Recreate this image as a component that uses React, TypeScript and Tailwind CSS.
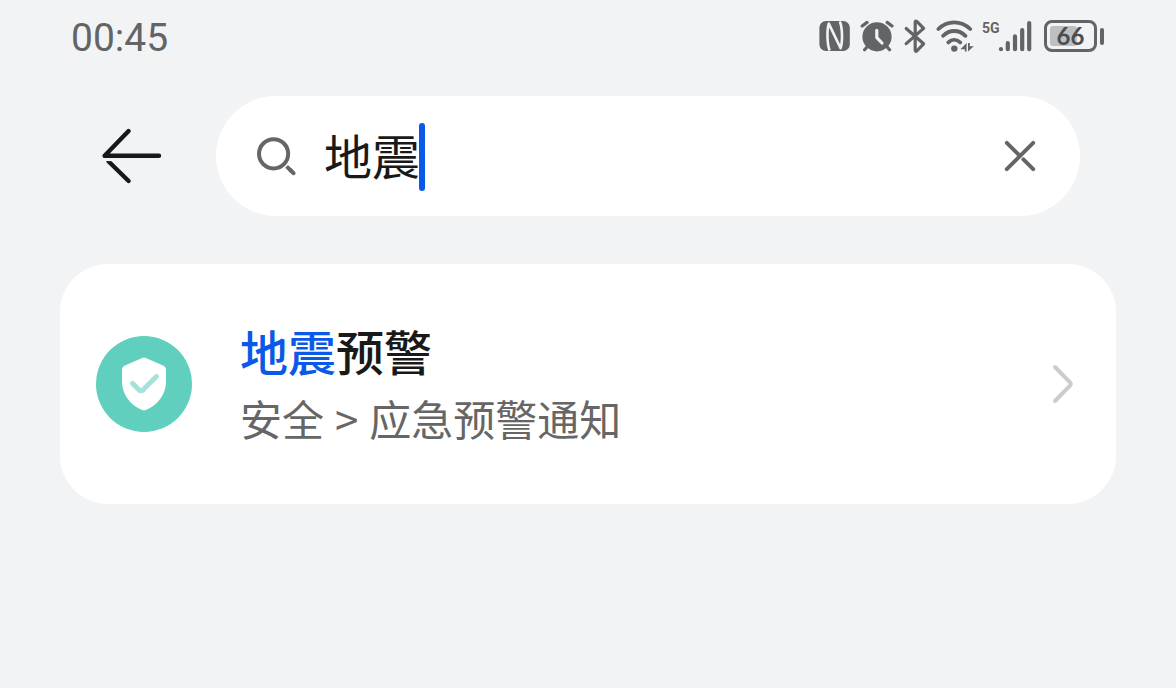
import React, { useState } from "react";

function NfcIcon() {
  return (
    <svg width="34" height="36" viewBox="0 0 34 36" fill="none" aria-label="NFC">
      <rect x="1.4" y="3" width="30.4" height="30" rx="6.5" fill="#626466" />
      <path d="M11.6 32.4C9 26 8.8 12 10.8 5.6L22.6 30.2C24.6 24 24.6 10 21.8 3.6" stroke="#f1f3f5" strokeWidth="2.6" strokeLinejoin="round" />
    </svg>
  );
}

function AlarmIcon() {
  return (
    <svg width="34" height="36" viewBox="0 0 34 36" fill="none" aria-label="闹钟">
      <circle cx="17" cy="18.8" r="14.6" fill="#626466" />
      <path d="M2.2 8L7 4.4M32 8L27.2 4.4M7 29L4.6 31.8M27.2 29L29.6 31.8" stroke="#626466" strokeWidth="3.2" strokeLinecap="round" />
      <path d="M16.8 12.4V19.6L22 25" stroke="#f1f3f5" strokeWidth="3.2" strokeLinecap="round" strokeLinejoin="round" />
    </svg>
  );
}

function BluetoothIcon() {
  return (
    <svg width="26" height="36" viewBox="0 0 26 36" fill="none" aria-label="蓝牙">
      <path d="M4.2 10.5L21.6 25.8L14.8 33Q13.2 34 13.2 32V4.4Q13.2 2.4 14.8 3.4L21.6 10.4L4.2 25.6" stroke="#626466" strokeWidth="3.2" strokeLinecap="round" strokeLinejoin="round" />
    </svg>
  );
}

function WifiIcon() {
  return (
    <svg width="38" height="36" viewBox="0 0 38 36" fill="none" aria-label="无线网络">
      <path d="M2.4 11C11.4 2.2 25 2.2 34.2 11M7.2 17.8C13.4 11.4 23 11.4 29.4 17.8M12.4 24.4C15.8 21 20.4 21 24.2 24.4" stroke="#626466" strokeWidth="3.8" strokeLinecap="round" />
      <circle cx="18.3" cy="30.6" r="3.2" fill="#626466" />
      <path d="M30.6 25V33.4H28.8V31.2H24.4ZM32 25V33.4L37.8 28.2H33.8V25Z" fill="#626466" />
    </svg>
  );
}

function SignalIcon() {
  return (
    <svg width="34" height="36" viewBox="0 0 34 36" fill="none" aria-label="信号">
      <path d="M3 31V31.2M9.8 25V31.2M17 18.4V31.2M24.2 12V31.2M31.2 5V31.2" stroke="#626466" strokeWidth="4.2" strokeLinecap="round" />
    </svg>
  );
}

function Battery({ level }: { level: number }) {
  return (
    <div className="flex items-center gap-[3px] pl-1" aria-label="电池电量">
      <div className="flex h-8 w-[53px] rounded-[8px] border-[3px] border-[#626466] p-[3px]">
        <div className="grid h-full w-full grid-cols-1 grid-rows-1 items-center">
          <div className="col-start-1 row-start-1 h-5 rounded-[3px] bg-[#bdbfc1]" style={{ width: `${level}%` }} />
          <span className="col-start-1 row-start-1 text-center font-[Lato,sans-serif] text-[24px] leading-5 font-bold text-[#4b4d4f]">
            {level}
          </span>
        </div>
      </div>
      <div className="h-[17px] w-1 rounded-full bg-[#626466]" />
    </div>
  );
}

function StatusBar() {
  return (
    <header className="flex h-[72px] items-center justify-between pr-[72px] pl-[71px]">
      <time className="pt-1 font-[Roboto,sans-serif] text-[39px] leading-[48px] text-[#626466]">00:45</time>
      <div className="flex items-center gap-2">
        <NfcIcon />
        <AlarmIcon />
        <BluetoothIcon />
        <WifiIcon />
        <div className="flex items-start">
          <span className="w-4 font-['Liberation_Sans_Narrow',Roboto,sans-serif] text-[14px] leading-5 font-bold text-[#626466]">5G</span>
          <SignalIcon />
        </div>
        <Battery level={66} />
      </div>
    </header>
  );
}

function SearchBar() {
  const [query, setQuery] = useState("地震");
  return (
    <div className="flex items-center gap-[52px] pt-6 pr-9 pl-10">
      <button type="button" aria-label="返回" className="shrink-0">
        <svg width="64" height="64" viewBox="0 0 64 64" fill="none" stroke="#17181a" strokeWidth="4.4" strokeLinecap="round" strokeLinejoin="round">
          <path d="M28.6 7L4.6 31.8H59" />
          <path d="M8.4 37.2L28.6 57" />
          <path d="M3 35.6H12" stroke="#f1f3f5" strokeWidth="3" strokeLinecap="butt" />
        </svg>
      </button>
      <form role="search" className="flex h-[120px] min-w-0 flex-1 items-center rounded-full bg-white pr-9 pl-9" onSubmit={(e) => e.preventDefault()}>
        <svg className="shrink-0" width="48" height="48" viewBox="0 0 48 48" fill="none" stroke="#666666" strokeWidth="4" aria-hidden="true">
          <circle cx="21.6" cy="21.8" r="14.6" />
          <path d="M34.6 34.4L40 39.6" strokeLinecap="butt" />
          <path d="M38 37.8L41.6 41.2" strokeLinecap="round" />
        </svg>
        <div className="relative ml-6 min-w-0 flex-1">
          <input
            type="text"
            aria-label="搜索设置"
            value={query}
            onChange={(e) => setQuery(e.target.value)}
            className="block h-[72px] w-full bg-transparent pb-1 font-['Noto_Sans_CJK_SC',sans-serif] text-[48px] leading-[68px] text-[#191919] caret-transparent outline-none"
          />
          <span className="pointer-events-none absolute top-[3px] left-[95px] h-[68px] w-1.5 rounded-full bg-[#0a59e8]" />
        </div>
        <button type="button" aria-label="清除" className="shrink-0" onClick={() => setQuery("")}>
          <svg width="48" height="48" viewBox="0 0 48 48" fill="none" stroke="#666666" strokeWidth="4" strokeLinecap="round">
            <path d="M10.8 37.2L37.2 10.8M10.8 10.8L22.4 22.4M27.4 27.4L37.2 37.2" />
          </svg>
        </button>
      </form>
    </div>
  );
}

function ResultCard() {
  return (
    <a href="#emergency-alerts" className="mt-12 flex h-60 items-center rounded-[48px] bg-white pr-8 pl-9">
      <svg className="shrink-0" width="96" height="96" viewBox="0 0 96 96" fill="none" aria-hidden="true">
        <circle cx="48" cy="48" r="48" fill="#61cfbe" />
        <path d="M45.6 22.2Q48 21 50.4 22.2L67 29.6Q70 31 70 34.2V46C70 58 61.5 69.5 50.4 73.8Q48 74.9 45.6 73.8C34.5 69.5 26 58 26 46V34.2Q26 31 29 29.6Z" fill="#ffffff" />
        <path d="M36.6 47.4L42.6 53.6Q45 55.8 47.4 53.6L60.4 40.6" stroke="#a5e2d9" strokeWidth="5" strokeLinecap="round" strokeLinejoin="round" />
      </svg>
      <div className="ml-12 min-w-0 flex-1 font-['Noto_Sans_CJK_SC',sans-serif]">
        <h2 className="text-[48px] leading-[66px] font-medium text-[#191919]">
          <span className="text-[#0a59e8]">地震</span>预警
        </h2>
        <p className="flex gap-[11px] pt-0.5 text-[42px] leading-[66px] text-[#666666]">
          <span>安全</span>
          <span>&gt;</span>
          <span>应急预警通知</span>
        </p>
      </div>
      <svg className="shrink-0" width="48" height="48" viewBox="0 0 48 48" fill="none" stroke="#cccccc" strokeWidth="4" strokeLinecap="round" strokeLinejoin="round" aria-hidden="true">
        <path d="M19 7L34 22.4Q35.4 24 34 25.6L19 41" />
      </svg>
    </a>
  );
}

export default function App() {
  return (
    <div className="min-h-screen bg-[#f1f3f5]">
      <StatusBar />
      <main className="px-[60px]">
        <SearchBar />
        <ResultCard />
      </main>
    </div>
  );
}
